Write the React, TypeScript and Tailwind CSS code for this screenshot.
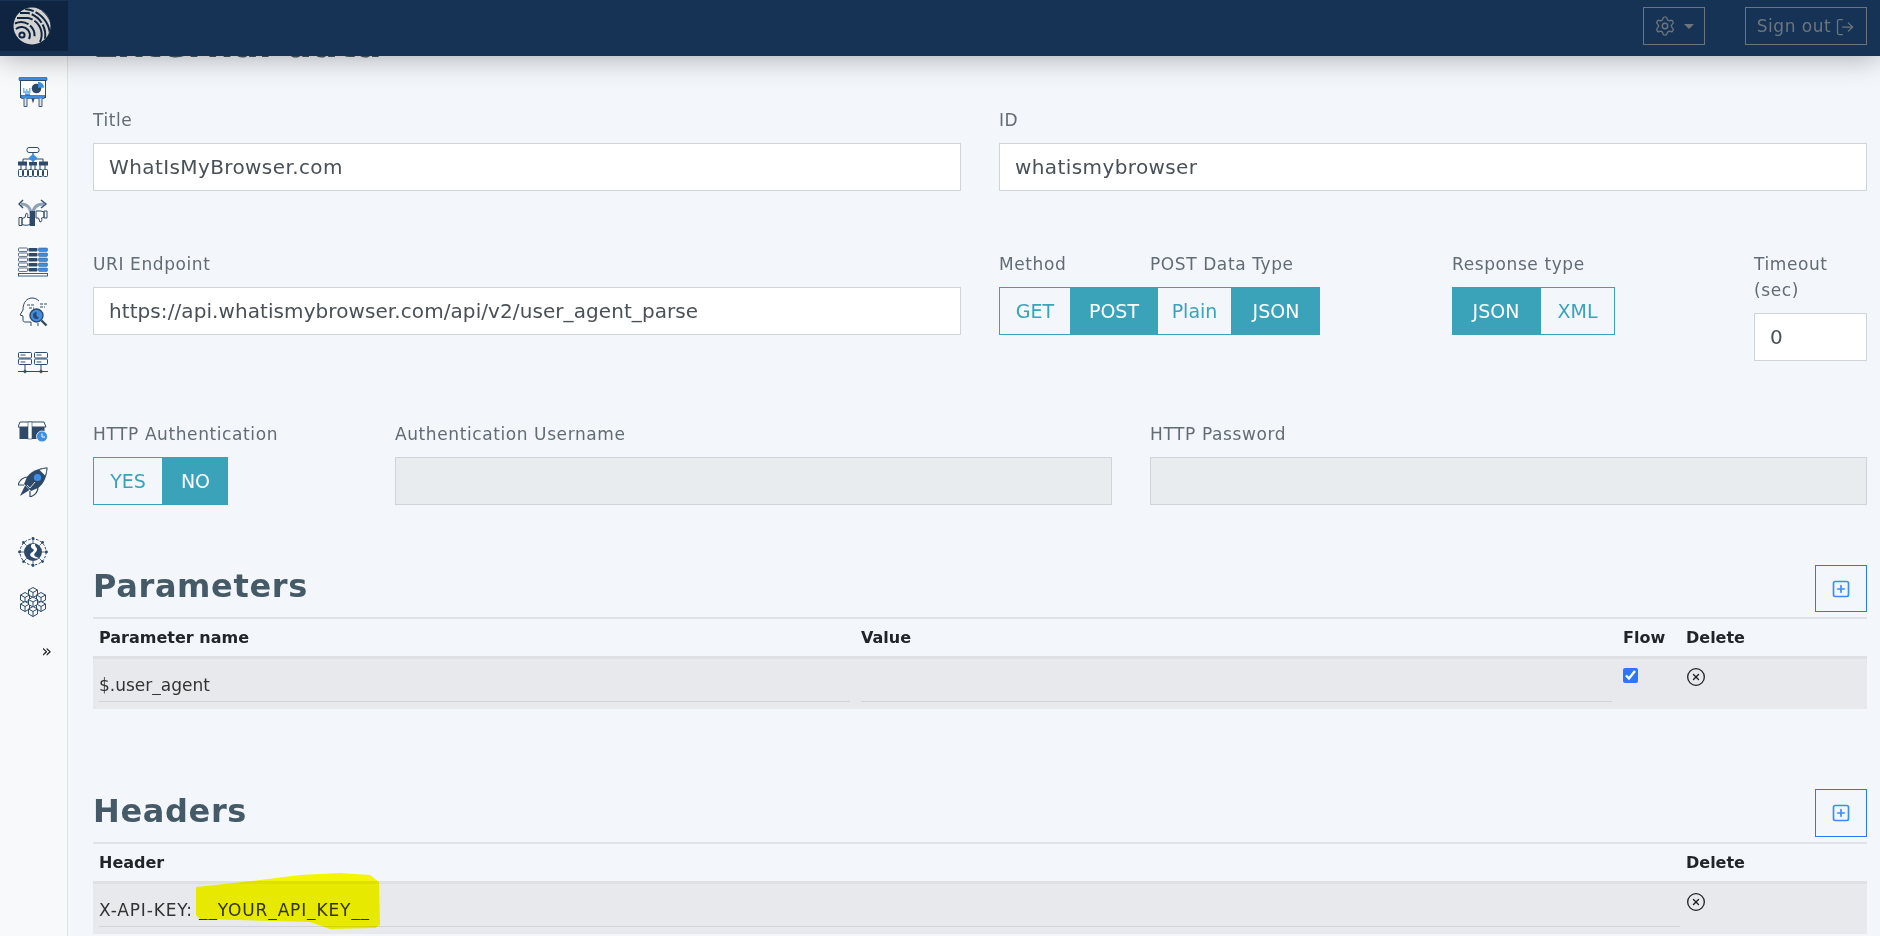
import type { ReactNode } from 'react'
import { CircleX, LogOut, Settings, SquarePlus } from 'lucide-react'

const dark = '#2f4a69'
const blue = '#3d8fe6'

function Logo() {
  return (
    <svg width="38" height="38" viewBox="0 0 38 38">
      <defs>
        <clipPath id="logo-clip">
          <circle cx="19" cy="19" r="18.5" />
        </clipPath>
      </defs>
      <circle cx="19" cy="19" r="18.5" fill="#d2d2d2" />
      <g clipPath="url(#logo-clip)" fill="none" stroke="#10243f" strokeWidth="2">
        <circle cx="9" cy="28" r="2.6" />
        <path d="M3 22a8.500 8.500 0 0 1 12 1a8.500 8.500 0 0 1 1 9" />
        <path d="M2 16.500a13.500 13.500 0 0 1 19 16" strokeDasharray="14 2 12 40" />
        <path d="M4 11h11a17 17 0 0 1 12 24" strokeDasharray="16 2 40" />
        <path d="M7 6h8a23 23 0 0 1 17 26" strokeDasharray="10 2 13 2 40" />
        <path d="M12 2a27 27 0 0 1 25 27" strokeDasharray="9 2 40" />
        <path d="M24 0a27 27 0 0 1 14 15" strokeDasharray="4 2 40" />
      </g>
    </svg>
  )
}

function PresentationIcon() {
  return (
    <svg width="30" height="30" viewBox="0 0 30 30">
      <rect x="1" y="0.500" width="28" height="3" rx="0.500" fill={blue} stroke={dark} strokeWidth="0.600" />
      <rect x="2.500" y="3.500" width="25" height="17" fill="#fff" stroke={dark} strokeWidth="1" />
      <path d="M5 16v-5h1.500v3H8v-2h1.500v2H11v-3h1.500v5z" fill="#7db8f0" />
      <circle cx="18.500" cy="11.500" r="4.800" fill={dark} />
      <path d="M20 4.800a6 6 0 0 1 6 6h-6z" fill={blue} />
      <rect x="7" y="16.500" width="5" height="2" fill={blue} />
      <rect x="3.500" y="18.500" width="23" height="3" fill={blue} stroke={dark} strokeWidth="0.600" />
      <path d="M6 21.500v8h3v-8M21 21.500v8h3v-8" fill="#dce6f0" stroke={dark} strokeWidth="0.900" />
      <path d="M13.500 21.500h3l-1.500 5z" fill={dark} />
    </svg>
  )
}

function FlowchartIcon() {
  return (
    <svg width="30" height="30" viewBox="0 0 30 30" fill="none" stroke={dark}>
      <rect x="9" y="0.500" width="12" height="5" rx="2" strokeWidth="1" fill="#fff" />
      <path d="M15 5.500v3M15 14v3M5 15v-3h20v3M3 18v4M8 18v4M22 18v4M27 18v4M13 18v4M17 18v4" strokeWidth="1" />
      <path d="M15 7l4.500 4-4.500 4-4.500-4z" fill={blue} stroke="none" />
      <rect x="0" y="14.500" width="9" height="4" fill={dark} strokeWidth="0" />
      <rect x="21" y="14.500" width="9" height="4" fill={dark} strokeWidth="0" />
      <rect x="11" y="15" width="8" height="3.500" fill={dark} strokeWidth="0" />
      {[0.500, 5.500, 10.500, 15.500, 20.500, 25.500].map((x) => (
        <rect key={x} x={x} y="22.500" width="4" height="7" rx="0.800" strokeWidth="1" fill="#fff" />
      ))}
    </svg>
  )
}

function SplitIcon() {
  return (
    <svg width="30" height="30" viewBox="0 0 30 30" fill="none" stroke={dark} strokeWidth="1">
      <path d="M13 29V17c0-6-4-10-10-10" strokeWidth="3" stroke="#8fa3b8" />
      <path d="M15 29V17c0-6 3-10 11-10" strokeWidth="3" stroke="#8fa3b8" />
      <rect x="12" y="14" width="5" height="15" fill={dark} stroke="none" />
      <path d="M5 3L1 7l4 4M23 3l5 4-5 4" strokeWidth="1.400" />
      <path d="M1 20.500h3v8H1zM4 21.500l3-1 1-4c2-1 2 2 1.500 4h2.500v7c-3 1-5 1-8 0z" fill="#fff" />
      <path d="M26 14h3v7h-3zM26 15l-3-1h-5v7h2.500l1.500 4c2 0 2-2 1.500-4l2.500-.5z" fill="#fff" />
    </svg>
  )
}

function TableIcon() {
  const rows = [1, 6, 11, 16, 21]
  return (
    <svg width="30" height="30" viewBox="0 0 30 30">
      {rows.map((y) => (
        <g key={y}>
          <rect x="0.500" y={y} width="9" height="3.400" rx="0.800" fill="#fff" stroke={dark} strokeWidth="0.800" />
          <rect x="10.500" y={y} width="9" height="3.400" rx="0.800" fill={dark} />
          <rect x="20.500" y={y} width="9" height="3.400" rx="0.800" fill={blue} stroke={dark} strokeWidth="0.500" />
        </g>
      ))}
      <rect x="0.500" y="26.500" width="29" height="2.500" fill="#fff" stroke={dark} strokeWidth="0.900" />
    </svg>
  )
}

function HeadIcon() {
  return (
    <svg width="30" height="30" viewBox="0 0 30 30" fill="none" stroke={dark} strokeWidth="1">
      <path d="M13 29v-4H7c-1.500 0-2-1-2-2v-4l-3-1 3-5C5 5 9 1 14 1c3 0 5 1 7 3" />
      <path d="M20 29v-3" />
      <path d="M9 8h7M11 11h5M22 7h7M22 10h5" strokeDasharray="3 1" />
      <circle cx="18.500" cy="18.500" r="6.500" fill={blue} stroke={dark} strokeWidth="1.400" />
      <path d="M15 18.500a3.500 3.500 0 0 1 3.500-3.500v3.500l2.500 2.500a3.500 3.500 0 0 1-6-2.500z" fill={dark} stroke="none" />
      <path d="M23.500 23.500l5 5" strokeWidth="2.400" />
    </svg>
  )
}

function ServersIcon() {
  const unit = (x: number) => (
    <g key={x}>
      <rect x={x} y="5.500" width="13" height="5.500" rx="1" fill="#fff" />
      <rect x={x} y="12" width="13" height="5.500" rx="1" fill="#fff" />
      <path d={`M${x + 2} 8h5M${x + 2} 15h5`} />
      <path d={`M${x + 6.500} 17.500v6`} />
      <circle cx={x + 6.500} cy="24.500" r="1.300" fill="#fff" />
    </g>
  )
  return (
    <svg width="30" height="30" viewBox="0 0 30 30" fill="none" stroke={dark} strokeWidth="1">
      {unit(0.500)}
      {unit(16.500)}
      <path d="M0 24.500h30" />
    </svg>
  )
}

function BoxIcon() {
  return (
    <svg width="30" height="30" viewBox="0 0 30 30">
      <path d="M2 5h24l2 5H0z" fill="#fff" stroke={dark} strokeWidth="1" />
      <rect x="1.500" y="10" width="25" height="12" fill={dark} />
      <rect x="10" y="5" width="4" height="17" fill="#fff" stroke={dark} strokeWidth="0.600" />
      <circle cx="24" cy="19.500" r="5.500" fill={blue} stroke="#fff" strokeWidth="0.800" />
      <path d="M24 16.500v3.500h3" fill="none" stroke="#fff" strokeWidth="1" />
    </svg>
  )
}

function RocketIcon() {
  return (
    <svg width="30" height="30" viewBox="0 0 30 30">
      <path d="M10 10c-4 0-8 2-10 8l6 0M20 20c0 4-2 8-8 10l0-6" fill="#fff" stroke={dark} strokeWidth="1.200" />
      <path d="M29.500 0.500C21 1 13 4 9 10l-3 7 7 7 7-3c6-4 9-12 9.500-20.500z" fill={dark} />
      <path d="M29 1c-3 .2-5.500 .8-8 1.800l6.300 6.300C28.200 6.600 28.800 4 29 1z" fill="#fff" stroke={dark} strokeWidth="0.800" />
      <circle cx="19.500" cy="10.500" r="3.600" fill={blue} />
      <path d="M7 18.500l4.500 4.500-9.500 6z" fill={dark} />
      <path d="M9 18l3 3 5-6" fill="none" stroke="#fff" strokeWidth="0.800" />
    </svg>
  )
}

function GlobeIcon() {
  const dots = [0, 45, 90, 135, 180, 225, 270, 315]
  return (
    <svg width="30" height="30" viewBox="0 0 30 30">
      <circle cx="15" cy="15" r="13" fill="none" stroke={dark} strokeWidth="1" strokeDasharray="2.500 1.500" />
      {dots.map((a) => {
        const r = (a * Math.PI) / 180
        return (
          <g key={a}>
            <line x1={15 + 9 * Math.cos(r)} y1={15 + 9 * Math.sin(r)} x2={15 + 13 * Math.cos(r)} y2={15 + 13 * Math.sin(r)} stroke={dark} strokeWidth="0.800" />
            <circle cx={15 + 13.500 * Math.cos(r)} cy={15 + 13.500 * Math.sin(r)} r="1.400" fill={dark} />
          </g>
        )
      })}
      <circle cx="15" cy="15" r="9" fill={dark} />
      <path d="M14 7c-2 2-1 4 1 5 2 1 0 3-2 4-2 2 0 4 3 5 2 .5 3 1 5 0-4-1-6-3-4-5 2-2 3-4 1-6-1-1-1-2-1-3z" fill="#fff" />
    </svg>
  )
}

function CubesIcon() {
  const cube = (x: number, y: number) => (
    <g key={`${x}-${y}`} transform={`translate(${x} ${y})`}>
      <path d="M4.500 0L9 2.500v5L4.500 10 0 7.500v-5z" fill="#f8f9fb" />
      <path d="M0 2.500L4.500 5 9 2.500M4.500 5v5" />
    </g>
  )
  return (
    <svg width="30" height="30" viewBox="0 0 30 30" fill="none" stroke={dark} strokeWidth="1">
      {cube(10.500, 0.500)}
      {cube(2.500, 5.500)}
      {cube(18.500, 5.500)}
      {cube(2.500, 14.500)}
      {cube(18.500, 14.500)}
      {cube(10.500, 10)}
      {cube(10.500, 19.500)}
    </svg>
  )
}

function Sidebar() {
  return (
    <aside className="w-[68px] shrink-0 border-r border-[#dfe2e8] bg-[#f8f9fb] pt-[21px]">
      <div className="flex flex-col items-center gap-10 pr-px">
        <PresentationIcon />
        <div className="flex flex-col gap-5">
          <FlowchartIcon />
          <SplitIcon />
          <TableIcon />
          <HeadIcon />
          <ServersIcon />
        </div>
        <div className="flex flex-col gap-5">
          <BoxIcon />
          <RocketIcon />
        </div>
        <div className="flex flex-col gap-5">
          <GlobeIcon />
          <CubesIcon />
        </div>
      </div>
      <div className="mt-[22px] pr-[15px] text-right text-[17px] leading-6 text-[#222]">»</div>
    </aside>
  )
}

function FieldLabel({ children }: { children: ReactNode }) {
  return <label className="mb-[10px] block text-[17px] leading-[26px] tracking-[0.035em] text-[#626c75]">{children}</label>
}

function Field({
  label,
  value,
  disabled,
  className,
  tracking = 'tracking-[0.02em]',
}: {
  label: ReactNode
  value?: string
  disabled?: boolean
  className?: string
  tracking?: string
}) {
  return (
    <div className={className}>
      <FieldLabel>{label}</FieldLabel>
      <input
        readOnly
        disabled={disabled}
        value={value ?? ''}
        className={`h-12 w-full border border-[#ced4da] px-[15px] text-[20px] text-[#495057] outline-none ${tracking} ${disabled ? 'bg-[#e9ecef]' : 'bg-white'}`}
      />
    </div>
  )
}

function Toggle({ text, active, width }: { text: string; active?: boolean; width: string }) {
  return (
    <span
      className={`flex h-12 shrink-0 items-center justify-center border border-[#3aa3ba] text-[19px] ${width} ${active ? 'bg-[#3aa3ba] text-white' : 'text-[#3aa3ba]'}`}
    >
      {text}
    </span>
  )
}

function SectionTitle({ title, tall }: { title: string; tall?: boolean }) {
  return (
    <div className="flex items-center justify-between border-b-2 border-[#dfe3e9] pb-[5px]">
      <h2 className="mb-[5px] text-[32px] font-bold leading-[38px] tracking-[0.02em] text-[#455a67]">{title}</h2>
      <button className={`flex w-[52px] items-center justify-center border border-[#2b78f6] text-[#3d8bfd] ${tall ? 'h-12' : 'h-[47px]'}`}>
        <SquarePlus size={20} strokeWidth={2} />
      </button>
    </div>
  )
}

function CellInput({ value, tracking }: { value?: string; tracking?: string }) {
  return (
    <input
      readOnly
      value={value ?? ''}
      className={`h-[34px] w-full border-b border-[#d1d3d6] bg-transparent text-[17px] text-[#333] outline-none ${tracking ?? ''}`}
    />
  )
}

export default function App() {
  return (
    <div className="relative flex h-[936px] flex-col overflow-hidden bg-[#f3f6fb] font-['DejaVu_Sans',sans-serif]">
      <header className="relative z-10 flex h-14 shrink-0 items-center justify-end gap-10 bg-[#163356] pb-1 pr-[13px] shadow-[0_0_30px_rgba(0,0,0,0.35)]">
        <div className="absolute left-0 top-px flex h-[50px] w-[68px] items-center justify-center bg-[#0f2440] pr-1">
          <Logo />
        </div>
        <button className="flex h-[38px] w-[62px] items-center justify-center gap-2 border border-[#6c757d] text-[#6c757d]">
          <Settings size={22} strokeWidth={1.5} />
          <span className="h-0 w-0 border-x-[5px] border-t-[5px] border-x-transparent border-t-[#6c757d]" />
        </button>
        <button className="flex h-[38px] w-[122px] items-center justify-center gap-1 border border-[#6c757d] pt-px text-[17px] tracking-[0.03em] text-[#6c757d]">
          Sign out
          <LogOut size={20} strokeWidth={1.5} />
        </button>
      </header>

      <div className="flex min-h-0 flex-1">
        <Sidebar />
        <main className="min-w-0 flex-1 pl-[25px] pr-[13px]">
          <h1 className="mb-[39px] mt-[-36px] text-[38px] font-bold leading-[48px] text-[#455a67]">External data</h1>

          <div className="flex flex-col gap-[60px]">
            <div className="grid grid-cols-2 gap-x-[38px]">
              <Field label="Title" value="WhatIsMyBrowser.com" />
              <Field label="ID" value="whatismybrowser" />
            </div>

            <div className="grid grid-cols-2 gap-x-[38px]">
              <Field label="URI Endpoint" value="https://api.whatismybrowser.com/api/v2/user_agent_parse" tracking="tracking-[0.004em]" />
              <div className="flex">
                <div className="w-[151px]">
                  <FieldLabel>Method</FieldLabel>
                  <div className="flex">
                    <Toggle text="GET" width="w-[72px]" />
                    <Toggle text="POST" active width="w-[86px]" />
                  </div>
                </div>
                <div className="w-[302px]">
                  <FieldLabel>POST Data Type</FieldLabel>
                  <div className="ml-[7px] flex">
                    <Toggle text="Plain" width="w-[75px]" />
                    <Toggle text="JSON" active width="w-[88px]" />
                  </div>
                </div>
                <div className="w-[302px]">
                  <FieldLabel>Response type</FieldLabel>
                  <div className="flex">
                    <Toggle text="JSON" active width="w-[88px]" />
                    <Toggle text="XML" width="w-[75px]" />
                  </div>
                </div>
                <Field label={<>Timeout<br />(sec)</>} value="0" className="w-[113px]" />
              </div>
            </div>

            <div className="grid grid-cols-[264px_717px_1fr] gap-x-[38px]">
              <div>
                <FieldLabel>HTTP Authentication</FieldLabel>
                <div className="flex">
                  <Toggle text="YES" width="w-[70px]" />
                  <Toggle text="NO" active width="w-[65px]" />
                </div>
              </div>
              <Field label="Authentication Username" disabled />
              <Field label="HTTP Password" disabled />
            </div>

            <section>
              <SectionTitle title="Parameters" />
              <div className="grid h-10 grid-cols-[762px_762px_63px_1fr] items-center border-b-[3px] border-[#dee0e4] pl-[6px] text-[16px] font-bold text-[#212529]">
                <span>Parameter name</span>
                <span>Value</span>
                <span>Flow</span>
                <span>Delete</span>
              </div>
              <div className="grid h-[50px] grid-cols-[762px_762px_63px_1fr] items-start bg-[#e8e9ed] pl-[6px] pt-[9px]">
                <div className="pr-[11px]">
                  <CellInput value="$.user_agent" />
                </div>
                <div className="pr-[11px]">
                  <CellInput />
                </div>
                <input type="checkbox" readOnly checked className="h-[15px] w-[15px] accent-[#2b78f6]" />
                <CircleX size={20} strokeWidth={1.6} className="-mt-px text-[#222]" />
              </div>
            </section>

            <section className="mt-5">
              <SectionTitle title="Headers" tall />
              <div className="grid h-10 grid-cols-[1587px_1fr] items-center border-b-[3px] border-[#dee0e4] pl-[6px] text-[16px] font-bold text-[#212529]">
                <span>Header</span>
                <span>Delete</span>
              </div>
              <div className="grid h-[50px] grid-cols-[1587px_1fr] items-start bg-[#e8e9ed] pl-[6px] pt-[9px]">
                <div className="pr-[6px]">
                  <CellInput value="X-API-KEY: __YOUR_API_KEY__" tracking="tracking-[0.05em]" />
                </div>
                <CircleX size={20} strokeWidth={1.6} className="-mt-px text-[#222]" />
              </div>
            </section>
          </div>
        </main>
      </div>

      {/* marker scribble laid over the header row */}
      <svg className="pointer-events-none absolute left-[190px] top-[868px] z-20 mix-blend-multiply" width="196" height="66" viewBox="0 0 196 66">
        <path d="M6 19L25 17L70 12L110 7L150 5L180 7L189 14L190 57L185 60L140 61L120 54L10 51L6 47Z" fill="#ffff00" />
      </svg>
    </div>
  )
}
